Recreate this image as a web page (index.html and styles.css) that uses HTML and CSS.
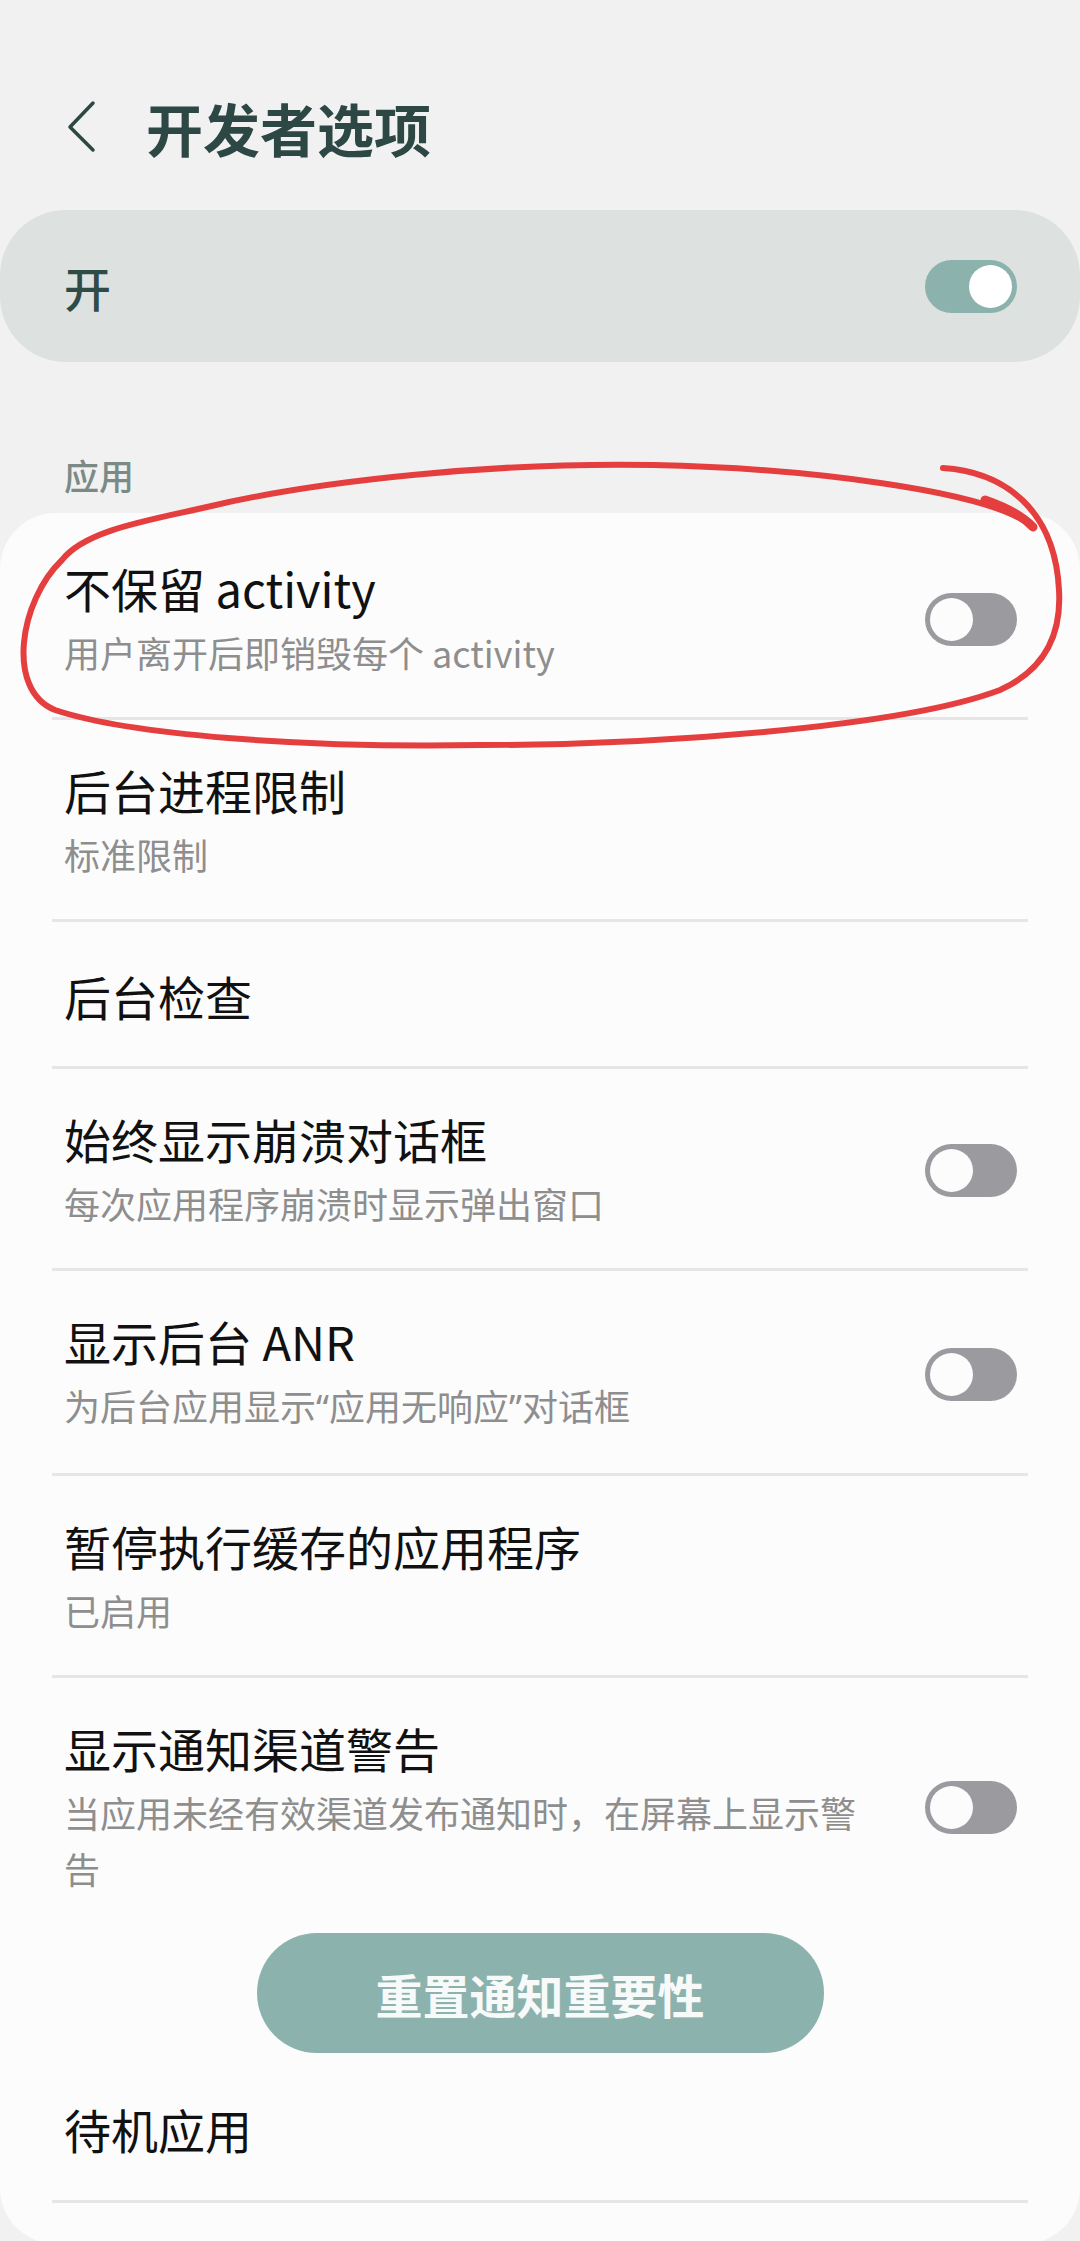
FILE: index.html
```html
<!DOCTYPE html>
<html lang="zh-CN">
<head>
    <meta charset="UTF-8">
    <meta name="viewport" content="width=device-width, initial-scale=1.0">
    <title>开发者选项</title>
    <link rel="stylesheet" href="styles.css">
</head>
<body>

    <div class="page">
        <header class="top-bar">
            <svg class="back" viewBox="0 0 40 56" width="40" height="56">
                <path d="M33 4 L10 28 L33 51" />
            </svg>
            <h1>开发者选项</h1>
        </header>

        <div class="master">
            <span>开</span>
            <span class="switch on"></span>
        </div>

        <p class="section-label">应用</p>

        <div class="card">
            <div class="row">
                <div class="text">
                    <div class="title">不保留 activity</div>
                    <div class="sub">用户离开后即销毁每个 activity</div>
                </div>
                <span class="switch"></span>
            </div>

            <div class="row">
                <div class="text">
                    <div class="title">后台进程限制</div>
                    <div class="sub">标准限制</div>
                </div>
            </div>

            <div class="row">
                <div class="text">
                    <div class="title">后台检查</div>
                </div>
            </div>

            <div class="row">
                <div class="text">
                    <div class="title">始终显示崩溃对话框</div>
                    <div class="sub">每次应用程序崩溃时显示弹出窗口</div>
                </div>
                <span class="switch"></span>
            </div>

            <div class="row">
                <div class="text">
                    <div class="title">显示后台 ANR</div>
                    <div class="sub">为后台应用显示<span class="q">“</span>应用无响应<span class="q">”</span>对话框</div>
                </div>
                <span class="switch"></span>
            </div>

            <div class="row">
                <div class="text">
                    <div class="title">暂停执行缓存的应用程序</div>
                    <div class="sub">已启用</div>
                </div>
            </div>

            <div class="row no-line">
                <div class="text">
                    <div class="title">显示通知渠道警告</div>
                    <div class="sub">当应用未经有效渠道发布通知时，在屏幕上显示警告</div>
                </div>
                <span class="switch"></span>
            </div>

            <div class="btn-row">
                <button class="reset-btn">重置通知重要性</button>
            </div>

            <div class="row last">
                <div class="text">
                    <div class="title">待机应用</div>
                </div>
            </div>
        </div>

        <!-- hand-drawn red circle around the first option -->
        <svg class="annotation" viewBox="0 0 1080 800" width="1080" height="800">
            <path d="M943 468 C1005 472 1055 510 1059 590 C1062 640 1040 672 1000 690 C900 728 650 745 480 745 C300 748 130 735 55 710 C5 690 20 600 62 560 C85 530 150 520 207 507 C320 480 500 462 654 465 C800 468 990 490 1033 527" />
            <path class="tail" d="M985 500 C1005 507 1022 515 1033 527" />
        </svg>
    </div>

</body>
</html>
```

FILE: styles.css
```css
body {
    margin: 0;
    background-color: #f0f1f0;
    font-family: "Noto Sans CJK SC", "Noto Sans", sans-serif;
    color: #111;
}

.page {
    position: relative;
    width: 1080px;
    min-height: 2241px;
    overflow: hidden;
}

/* header */
.top-bar {
    display: flex;
    align-items: center;
    height: 80px;
    padding: 87px 0 0 60px;
}

.back {
    flex: none;
}

.back path {
    fill: none;
    stroke: #2d4844;
    stroke-width: 3.5;
    stroke-linecap: round;
    stroke-linejoin: round;
}

.top-bar h1 {
    margin: 0 0 0 46px;
    font-size: 57px;
    line-height: 80px;
    font-weight: 700;
    color: #2d4844;
}

/* master switch */
.master {
    margin-top: 43px;
    height: 152px;
    box-sizing: border-box;
    border-radius: 66px;
    background-color: #dde1df;
    display: flex;
    align-items: center;
    justify-content: space-between;
    padding: 0 63px 0 64px;
    font-size: 47px;
    font-weight: 500;
    color: #2f4b47;
}

.section-label {
    margin: 89px 0 0;
    padding-left: 64px;
    font-size: 35px;
    line-height: 48px;
    font-weight: 500;
    color: #7b8a87;
}

/* list card */
.card {
    margin-top: 14px;
    background-color: #fcfcfc;
    border-radius: 56px;
    padding: 5px 52px 41px;
}

.row {
    display: flex;
    align-items: center;
    min-height: 147px;
    box-sizing: border-box;
    padding: 41px 11px 37px 12px;
    border-bottom: 3px solid #e6e6e6;
}

.row.no-line {
    border-bottom: none;
    padding-bottom: 0;
}

.row.last {
    min-height: 150px;
}

.text {
    flex: 1;
    min-width: 0;
}

.title {
    font-size: 47px;
    line-height: 58px;
    color: #111;
}

.sub {
    margin-top: 7px;
    font-size: 36px;
    line-height: 56px;
    color: #8e8e8e;
}

.sub .q {
    font-family: "Noto Sans", sans-serif;
}

/* switches */
.switch {
    flex: none;
    display: flex;
    align-items: center;
    box-sizing: border-box;
    width: 92px;
    height: 53px;
    padding: 0 5px;
    border-radius: 27px;
    background-color: #9b9b9f;
    margin-left: 48px;
}

.switch::after {
    content: "";
    width: 43px;
    height: 43px;
    border-radius: 50%;
    background-color: #fcfcfc;
}

.switch.on {
    justify-content: flex-end;
    background-color: #8cb2ad;
}

.switch.on::after {
    background-color: #fff;
}

/* reset button */
.btn-row {
    display: flex;
    justify-content: center;
    padding-top: 37px;
}

.reset-btn {
    width: 567px;
    height: 120px;
    border: none;
    border-radius: 60px;
    background-color: #8cb2ad;
    color: #f7faf9;
    font-family: inherit;
    font-size: 47px;
    font-weight: 700;
}

/* red marker */
.annotation {
    position: absolute;
    top: 0;
    left: 0;
    pointer-events: none;
}

.annotation path {
    fill: none;
    stroke: #e53e3e;
    stroke-width: 6;
    stroke-linecap: round;
    stroke-linejoin: round;
}

.annotation .tail {
    stroke-width: 9;
}
```
